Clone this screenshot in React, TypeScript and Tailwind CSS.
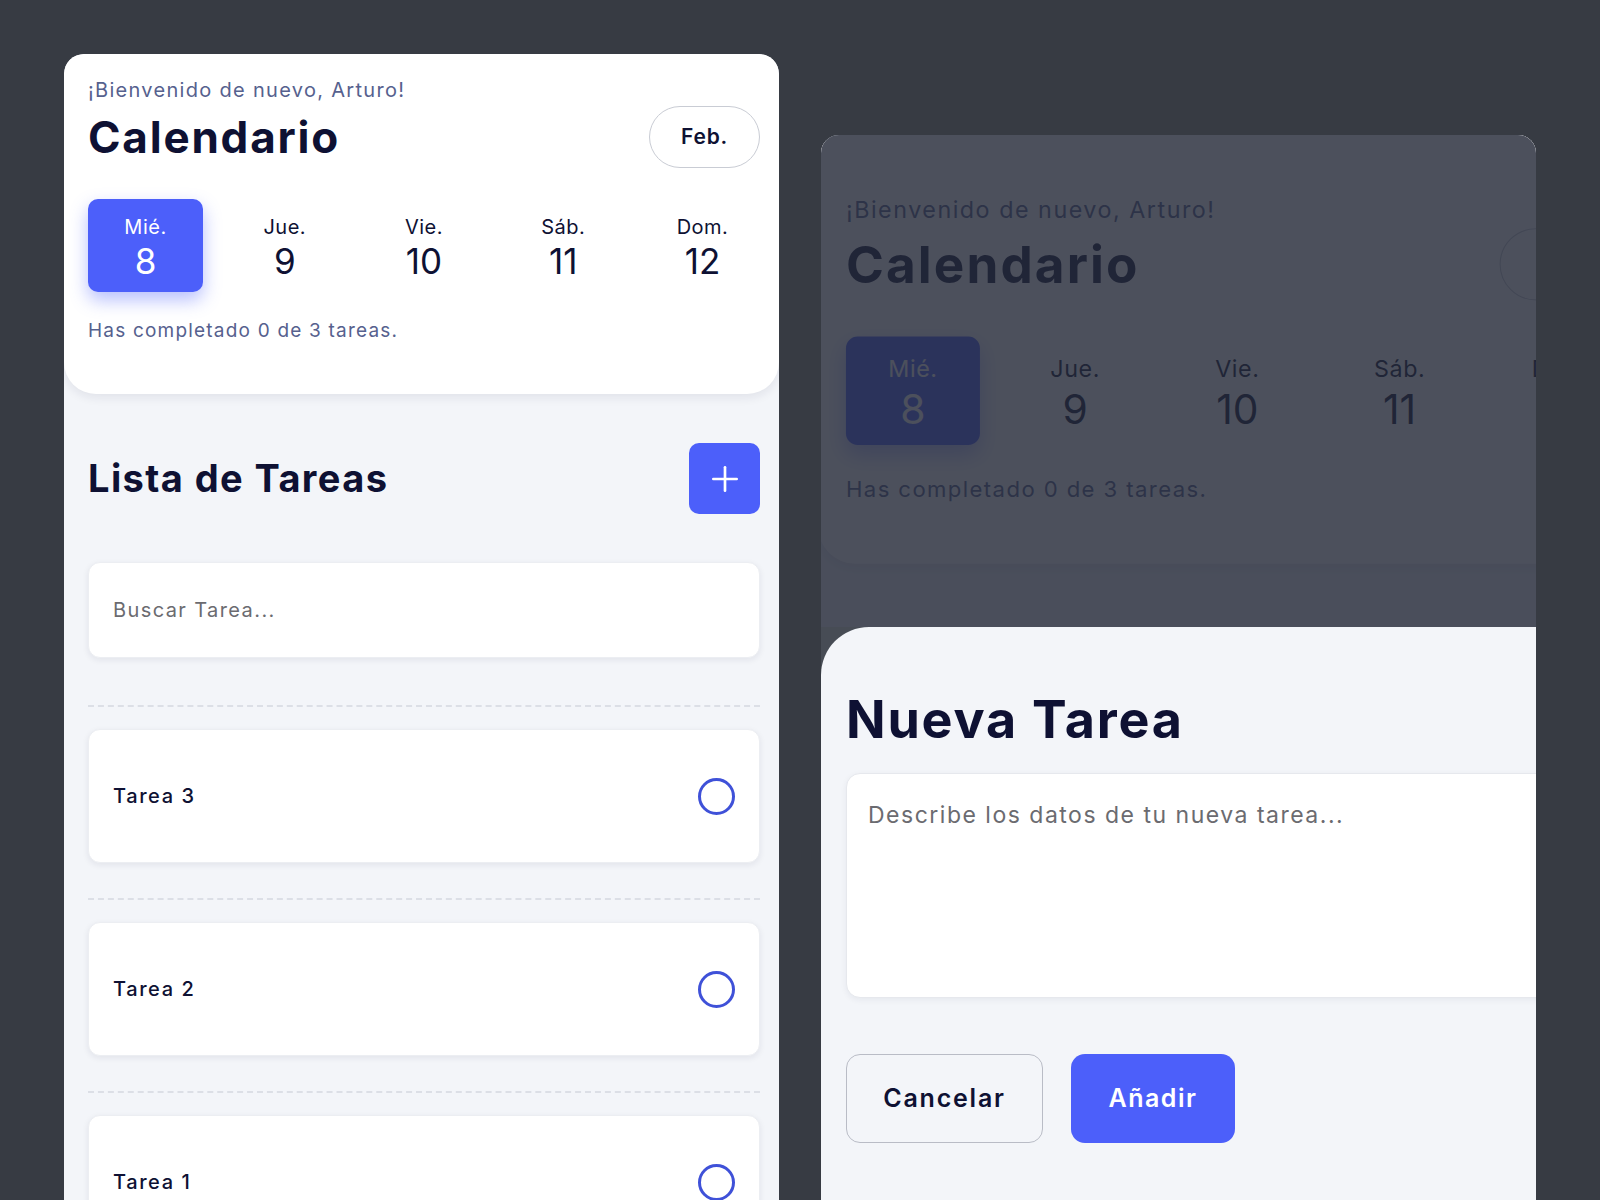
import { Plus } from 'lucide-react';

const days = [
  { label: 'Mié.', num: '8', active: true },
  { label: 'Jue.', num: '9' },
  { label: 'Vie.', num: '10' },
  { label: 'Sáb.', num: '11' },
  { label: 'Dom.', num: '12' },
];

const tasks = ['Tarea 3', 'Tarea 2', 'Tarea 1'];

function CalendarCard({ tall = false }: { tall?: boolean }) {
  return (
    <div
      className={`w-[715px] rounded-t-[20px] rounded-b-[32px] bg-white pb-[51px] pl-[24px] pr-[19px] shadow-[0_4px_10px_rgba(20,30,60,0.08)] ${
        tall ? 'pt-[52px]' : 'pt-[24px]'
      }`}
    >
      <p className="text-[20px] leading-[24px] tracking-[1.3px] text-[#56618e]">¡Bienvenido de nuevo, Arturo!</p>
      <div className="mt-[4px] flex h-[62px] items-center justify-between">
        <h1 className="text-[44px] font-bold leading-[52px] tracking-[1.8px] text-[#0e1133]">Calendario</h1>
        <button className="h-[62px] w-[111px] rounded-full border-[1.5px] border-[#c9ccd4] text-[21px] font-semibold tracking-[0.8px] text-[#0e1133]">
          Feb.
        </button>
      </div>
      <div className="mt-[31px] flex justify-between">
        {days.map((d) => (
          <div
            key={d.num}
            className={`flex h-[93px] w-[115px] flex-col items-center pt-[16px] rounded-[10px] ${
              d.active
                ? 'bg-[#4c5ffa] text-white shadow-[0_8px_18px_rgba(76,95,250,0.4)]'
                : 'text-[#0e1133]'
            }`}
          >
            <span className="text-[20px] leading-[24px] tracking-[0.5px]">{d.label}</span>
            <span className="mt-[3px] text-[35px] leading-[38px]">{d.num}</span>
          </div>
        ))}
      </div>
      <p className="mt-[27px] text-[19px] leading-[24px] tracking-[1.2px] text-[#56618e]">Has completado 0 de 3 tareas.</p>
    </div>
  );
}

function Dashed({ className = '' }: { className?: string }) {
  return <div className={`border-t-2 border-dashed border-[#dcdfe6] ${className}`} />;
}

export default function App() {
  return (
    <div
      className="flex h-[1200px] w-[1600px] items-start gap-[42px] overflow-hidden bg-[#373b43] pl-[64px] pt-[54px]"
      style={{ fontFamily: 'Inter, "Noto Sans", sans-serif' }}
    >
      {/* Left phone */}
      <div className="flex h-[1146px] w-[715px] shrink-0 flex-col overflow-hidden rounded-t-[20px] bg-[#f3f5f9]">
        <CalendarCard />
        <div className="pl-[24px] pr-[19px]">
          <div className="mt-[49px] flex h-[71px] items-center justify-between">
            <h2 className="text-[38px] font-bold tracking-[1.4px] text-[#0e1133]">Lista de Tareas</h2>
            <button className="flex h-[71px] w-[71px] items-center justify-center rounded-[10px] bg-[#4c5ffa] text-white">
              <Plus size={40} strokeWidth={1.6} />
            </button>
          </div>
          <div className="mt-[48px] flex h-[96px] items-center rounded-[12px] border border-[#eceef2] bg-white px-[24px] shadow-[0_2px_6px_rgba(20,30,60,0.08)]">
            <span className="text-[20px] tracking-[1.4px] text-[#6b6b70]">Buscar Tarea...</span>
          </div>
          {tasks.map((t, i) => (
            <div key={t}>
              <Dashed className={i === 0 ? 'mt-[47px]' : 'mt-[35px]'} />
              <div className="mt-[22px] flex h-[134px] items-center justify-between rounded-[12px] border border-[#eceef2] bg-white px-[24px] shadow-[0_2px_6px_rgba(20,30,60,0.08)]">
                <span className="text-[20px] font-medium tracking-[1.6px] text-[#0e1133]">{t}</span>
                <div className="h-[37px] w-[37px] rounded-full border-[3px] border-[#3f51d8]" />
              </div>
            </div>
          ))}
        </div>
      </div>

      {/* Right phone with modal sheet */}
      <div className="mt-[81px] flex h-[1065px] w-[715px] shrink-0 flex-col overflow-hidden rounded-t-[18px] bg-[#474c55]">
        <div className="relative h-[492px] shrink-0 overflow-hidden bg-[#f3f5f9]">
          <div className="-translate-x-[3px] origin-top-left scale-[1.165]">
            <CalendarCard tall />
          </div>
          <div className="absolute inset-0 bg-[rgba(36,42,56,0.82)]" />
        </div>
        <div className="flex-1 rounded-tl-[48px] bg-[#f3f5f9] pl-[25px] pt-[63px]">
          <h2 className="text-[52px] font-bold leading-[60px] tracking-[1.8px] text-[#0e1133]">Nueva Tarea</h2>
          <div className="mt-[23px] h-[225px] w-[760px] rounded-[14px] border border-[#e6e8ed] bg-white pl-[21px] pt-[26px] shadow-[0_2px_6px_rgba(20,30,60,0.06)]">
            <span className="text-[23px] leading-[30px] tracking-[1.5px] text-[#6b6b70]">Describe los datos de tu nueva tarea...</span>
          </div>
          <div className="mt-[56px] flex gap-[28px]">
            <button className="h-[89px] w-[197px] rounded-[14px] border-[1.5px] border-[#b9bcc6] text-[25px] font-semibold tracking-[1.8px] text-[#0e1133]">
              Cancelar
            </button>
            <button className="h-[89px] w-[164px] rounded-[14px] bg-[#4c5ffa] text-[25px] font-semibold tracking-[1.5px] text-white">
              Añadir
            </button>
          </div>
        </div>
      </div>
    </div>
  );
}
